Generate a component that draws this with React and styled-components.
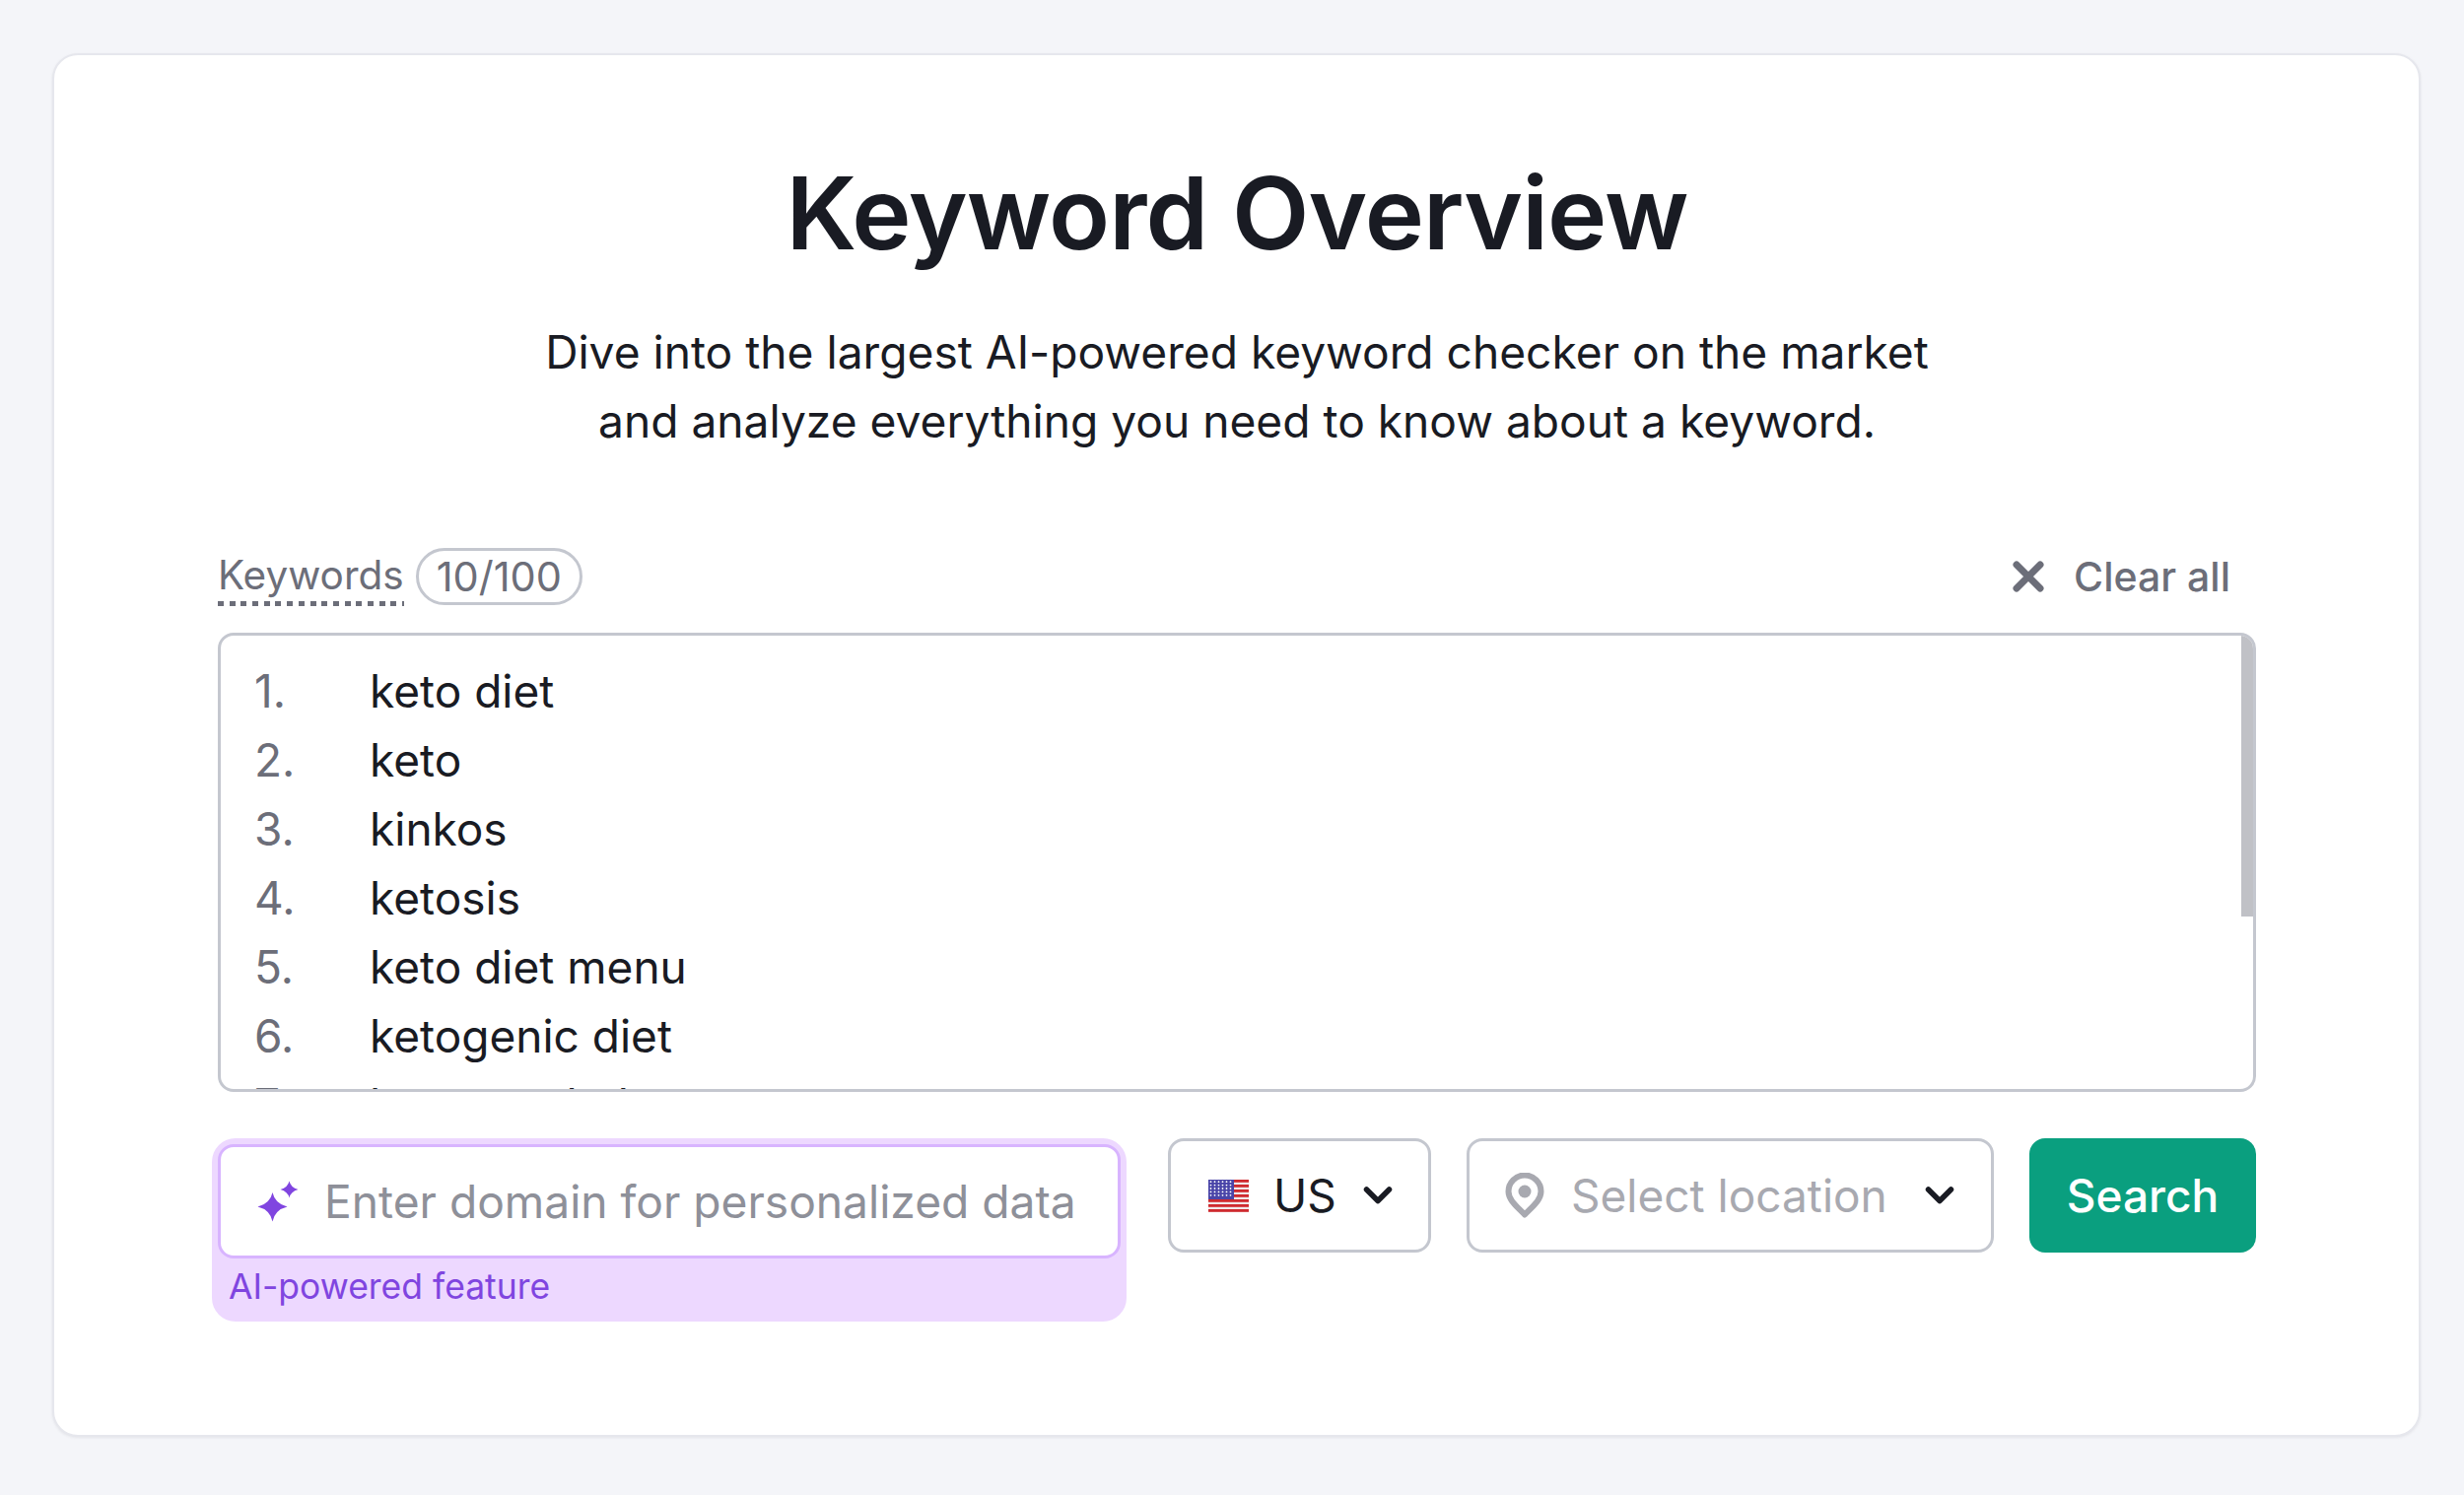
import React from "react";
import styled, { createGlobalStyle } from "styled-components";

const Global = createGlobalStyle`
  html, body { margin: 0; padding: 0; background: #f4f5f9; }
  body { font-family: Inter, "Liberation Sans", sans-serif; color: #191b23; }
  * { box-sizing: border-box; }
`;
const Page = styled.div`
  height: 1517px;
  padding: 54px 44px 59px 53px;
`;
const Card = styled.main`
  height: 100%;
  background: #fff;
  border: 2px solid #e6e7ed;
  border-radius: 26px;
  box-shadow: 0 1px 3px rgba(25, 27, 35, 0.08);
  padding: 95px 165px 0 166px;
`;
const Title = styled.h1`
  margin: 0;
  text-align: center;
  font-size: 102px;
  line-height: 130px;
  font-weight: 600;
  letter-spacing: -0.9px;
  color: #191b23;
`;
const Subtitle = styled.p`
  margin: 41px 0 0;
  text-align: center;
  font-size: 46.150px;
  line-height: 70px;
  color: #191b23;
`;
const LabelRow = styled.div`
  display: flex;
  align-items: center;
  justify-content: space-between;
  height: 58px;
  margin-top: 94px;
`;
const LabelGroup = styled.div`
  display: flex;
  align-items: center;
  gap: 12px;
`;
const Label = styled.span`
  font-size: 40.500px;
  line-height: 58px;
  padding-bottom: 2px;
  color: #6c6e79;
  background: repeating-linear-gradient(90deg, #6c6e79 0 6px, transparent 6px 11.700px) left bottom / 100% 5px no-repeat;
`;
const Pill = styled.span`
  height: 58px;
  padding: 0 18px;
  display: flex;
  align-items: center;
  border: 3px solid #c4c7cf;
  border-radius: 29px;
  font-size: 41.500px;
  color: #6c6e79;
`;
const ClearButton = styled.button`
  display: flex;
  align-items: center;
  gap: 30px;
  margin-right: 26px;
  padding: 0;
  border: 0;
  background: none;
  font: 500 41px Inter, sans-serif;
  color: #6c6e79;
`;
const ListBox = styled.div`
  position: relative;
  height: 466px;
  margin-top: 28px;
  padding: 0 0 0 34px;
  border: 3px solid #c4c7cf;
  border-radius: 16px;
  overflow: hidden;
`;
const Scrollbar = styled.div`
  position: absolute;
  top: 0;
  right: 0;
  width: 12px;
  height: 285px;
  background: #c0c1c6;
`;
const List = styled.ol`
  margin: 0;
  padding: 21px 0 0;
  list-style: none;
`;
const Item = styled.li`
  display: grid;
  grid-template-columns: 117px 1fr;
  height: 70px;
  font-size: 46px;
  line-height: 70px;
`;
const Num = styled.span`
  color: #6c6e79;
`;
const Controls = styled.div`
  display: flex;
  align-items: flex-start;
  gap: 36px;
  margin-top: 47px;
`;
const AiPanel = styled.div`
  width: 928px;
  height: 186px;
  margin-left: -6px;
  margin-right: 6px;
  padding: 6px;
  background: #edd8ff;
  border-radius: 24px;
  flex: none;
`;
const AiInput = styled.div`
  height: 116px;
  display: flex;
  align-items: center;
  gap: 25px;
  padding-left: 37px;
  background: #fff;
  border: 3px solid #d8b4ff;
  border-radius: 16px;
  font-size: 46.150px;
  color: #8e9099;
  white-space: nowrap;
`;
const AiNote = styled.div`
  margin: 7px 0 0 11px;
  font-size: 35.500px;
  line-height: 44px;
  color: #8045e0;
`;
const Select = styled.div`
  width: ${p => p.$w}px;
  height: 116px;
  flex: none;
  display: flex;
  align-items: center;
  padding-left: ${p => p.$pl}px;
  border: 3px solid #c4c7cf;
  border-radius: 16px;
  font-size: 46px;
  white-space: nowrap;
  color: ${p => (p.$muted ? "#a8a9b0" : "#191b23")};
`;
const SelectText = styled.span`
  margin-left: ${p => p.$ml}px;
`;
const Chevron = styled.svg`
  margin-left: auto;
  margin-right: ${p => p.$mr}px;
`;
const SearchButton = styled.button`
  width: 230px;
  height: 116px;
  flex: none;
  border: 0;
  border-radius: 16px;
  background: #0a9f7f;
  color: #fff;
  font: 500 46px Inter, sans-serif;
`;

const keywords = ["keto diet", "keto", "kinkos", "ketosis", "keto diet menu", "ketogenic diet", "keto meal plan"];

const ChevronIcon = ({ mr }) => (
  <Chevron $mr={mr} width="30" height="20" viewBox="0 0 30 20" fill="none">
    <path d="M3.500 4 15 15.500 26.500 4" stroke="#191b23" strokeWidth="5.500" strokeLinecap="round" strokeLinejoin="round" />
  </Chevron>
);

const Flag = () => {
  const stars = [];
  for (let r = 0; r < 5; r++) for (let c = 0; c < 6; c++) stars.push(<circle key={`${r}-${c}`} cx={2.5 + c * 4} cy={2.2 + r * 3.4} r="0.9" fill="#fff" />);
  return (
    <svg width="41" height="33" viewBox="0 0 41 33">
      <rect width="41" height="33" fill="#f1e9ea" />
      {[0, 5, 10, 15, 20, 25, 30].map(y => <rect key={y} y={y} width="41" height="2.800" fill="#cf2a2f" />)}
      <rect width="26" height="20" fill="#4a45a8" />
      {stars}
    </svg>
  );
};

export default function App() {
  return (
    <Page>
      <Global />
      <Card>
        <Title>Keyword Overview</Title>
        <Subtitle>
          Dive into the largest AI-powered keyword checker on the market
          <br />
          and analyze everything you need to know about a keyword.
        </Subtitle>
        <LabelRow>
          <LabelGroup>
            <Label>Keywords</Label>
            <Pill>10/100</Pill>
          </LabelGroup>
          <ClearButton>
            <svg width="32" height="32" viewBox="0 0 32 32" fill="none">
              <path d="M4 4 28 28M28 4 4 28" stroke="#6c6e79" strokeWidth="7" strokeLinecap="round" />
            </svg>
            Clear all
          </ClearButton>
        </LabelRow>
        <ListBox>
          <List>
            {keywords.map((k, i) => (
              <Item key={k}>
                <Num>{i + 1}.</Num>
                <span>{k}</span>
              </Item>
            ))}
          </List>
          <Scrollbar />
        </ListBox>
        <Controls>
          <AiPanel>
            <AiInput>
              <svg width="43" height="42" viewBox="0 0 42 42" fill="#8045e0">
                <path d="M15 12 Q17.500 23.500 30 26.500 Q17.500 29.500 15 41.500 Q12.500 29.500 0 26.500 Q12.500 23.500 15 12Z" />
                <path d="M32 0.500 Q33.500 7 41 9 Q33.500 11 32 17.500 Q30.500 11 23 9 Q30.500 7 32 0.500Z" />
              </svg>
              Enter domain for personalized data
            </AiInput>
            <AiNote>AI-powered feature</AiNote>
          </AiPanel>
          <Select $w={267} $pl={38}>
            <Flag />
            <SelectText $ml={25}>US</SelectText>
            <ChevronIcon mr={36} />
          </Select>
          <Select $w={535} $pl={36} $muted>
            <svg width="40" height="46" viewBox="0 0 40 46" fill="none">
              <path d="M20 42.500C13 35 3.500 28 3.500 19a16.500 16.500 0 0 1 33 0c0 9-9.500 16-16.500 23.500Z" stroke="#a8a9b0" strokeWidth="6" strokeLinejoin="round" />
              <circle cx="20" cy="19" r="6.500" fill="#a8a9b0" />
            </svg>
            <SelectText $ml={27}>Select location</SelectText>
            <ChevronIcon mr={37} />
          </Select>
          <SearchButton>Search</SearchButton>
        </Controls>
      </Card>
    </Page>
  );
}
